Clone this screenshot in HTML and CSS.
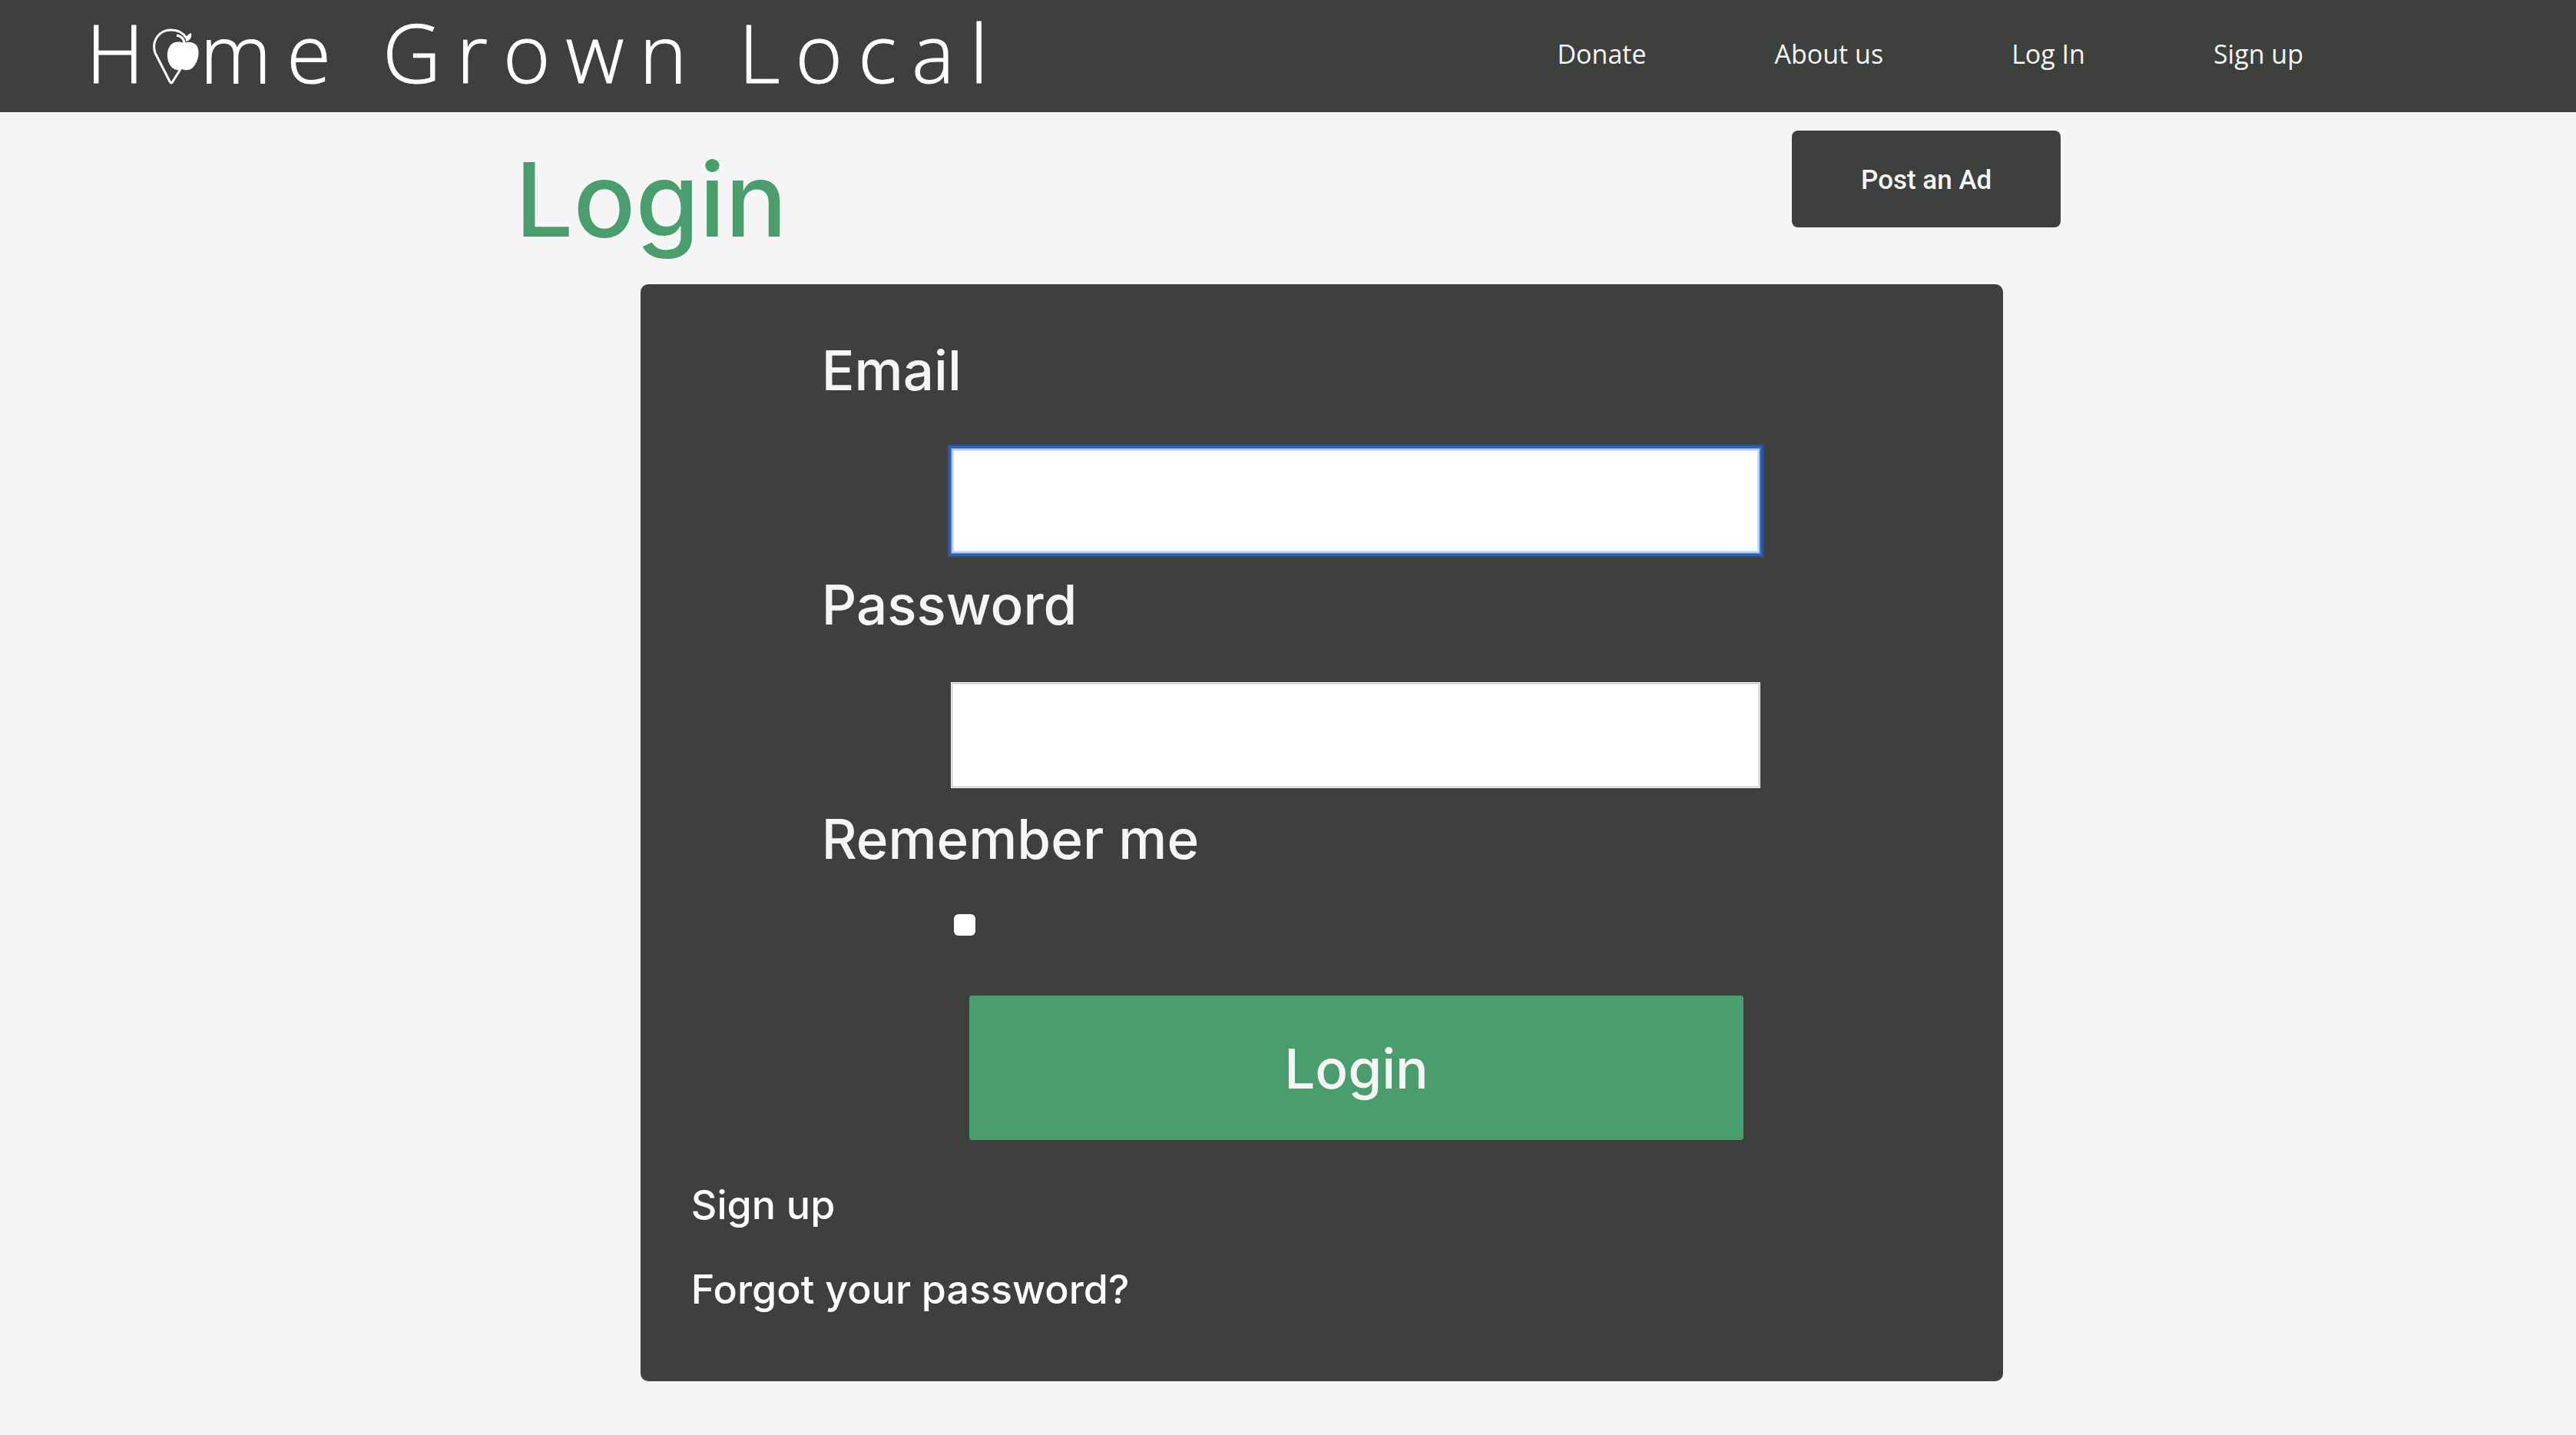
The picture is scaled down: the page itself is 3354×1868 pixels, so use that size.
FILE: index.html
```html
<!DOCTYPE html>
<html lang="en">
<head>
<meta charset="utf-8">
<title>Home Grown Local - Login</title>
<link rel="stylesheet" href="styles.css">
</head>
<body>
<header class="site-header">
  <a class="logo" href="#" aria-label="Home Grown Local">
    <span>H</span>
    <svg class="logo-mark" viewBox="0 0 62 74" aria-hidden="true">
      <path class="pin" d="M36 53 L26 69 Q24 73 22 69 L3 32 C-2 16 8 2 24 2 C34 2 40 6 44 13"/>
      <path class="stem" d="M31 9 C37 10 41 14 41 21"/>
      <path class="apple" d="M40 19 C35 17 29 17 25 20 C17 26 17 42 24 50 C29 55 34 55 38 53 C42 55 49 55 53 50 C60 42 62 27 56 21 C51 17 45 17 40 19 Z"/>
      <path class="apple" d="M43 17 C42 11 45 8 50 6 C51 12 48 16 43 17 Z"/>
    </svg>
    <span>me Grown Local</span>
  </a>
  <nav class="site-nav">
    <a href="#">Donate</a>
    <a href="#">About us</a>
    <a href="#">Log In</a>
    <a href="#">Sign up</a>
  </nav>
</header>
<main class="page">
  <div class="page-top">
    <h1>Login</h1>
    <button class="post-ad" type="button">Post an Ad</button>
  </div>
  <section class="card">
    <form class="login-form">
      <div class="field">
        <label for="email">Email</label>
        <input class="text-input" id="email" type="email" autofocus>
      </div>
      <div class="field">
        <label for="password">Password</label>
        <input class="text-input" id="password" type="password">
      </div>
      <div class="field">
        <label for="remember">Remember me</label>
        <input class="check" id="remember" type="checkbox">
      </div>
      <button class="submit" type="submit">Login</button>
    </form>
    <div class="links">
      <a href="#">Sign up</a>
      <a href="#">Forgot your password?</a>
    </div>
  </section>
</main>
</body>
</html>
```
FILE: styles.css
```css
* { box-sizing: border-box; }

body {
  margin: 0;
  background: #f5f5f5;
  color: #f5f5f5;
  font-family: Inter, sans-serif;
}

a { color: inherit; text-decoration: none; }

.site-header {
  display: flex;
  justify-content: space-between;
  height: 146px;
  padding: 0 355px 0 112px;
  background: #3e403d;
  border-bottom: 1px solid #423a44;
  font-family: "Open Sans", sans-serif;
}

.logo {
  display: flex;
  color: #fff;
  font-size: 105px;
  font-weight: 300;
  line-height: 136px;
  letter-spacing: 20px;
  white-space: nowrap;
  -webkit-text-stroke: 1px #fff;
}

.logo-mark {
  width: 62px;
  height: 74px;
  margin: 37px 0 0 -9px;
}

.pin,
.stem { fill: none; stroke: #fff; stroke-width: 3; }
.apple { fill: #fff; }

.site-nav {
  display: flex;
  gap: 167px;
  font-size: 34px;
  line-height: 140px;
}

.page {
  width: 60%;
  margin: 0 auto;
  padding-bottom: 70px;
}

.page-top {
  display: flex;
  justify-content: space-between;
  align-items: flex-start;
  height: 224px;
  padding-top: 24px;
}

h1 {
  margin: 0;
  color: #4a9d6c;
  font-size: 134px;
  font-weight: 500;
  line-height: 178px;
}

.post-ad {
  width: 350px;
  height: 126px;
  padding-top: 3px;
  border: 0;
  border-radius: 8px;
  background: #3e403d;
  color: #f5f5f5;
  font-family: Roboto, sans-serif;
  font-size: 35px;
  font-weight: 500;
}

.card {
  margin: 0 75px 0 163px;
  padding: 64px 66px;
  border-radius: 10px;
  background: #3e403d;
}

.login-form {
  display: flex;
  flex-direction: column;
  padding: 0 250px 0 170px;
}

.field {
  display: flex;
  flex-direction: column;
}

label {
  font-size: 71px;
  font-weight: 500;
  line-height: 96px;
}

.text-input {
  height: 138px;
  margin: 53px 0 18px 168px;
  padding: 0 24px;
  border: 1px solid #fff;
  border-radius: 0;
  background: #fff;
  box-shadow: inset 0 0 0 1px #bfbfbf, inset 0 0 0 2px #eeeeee;
  font-size: 68px;
}

.text-input:focus {
  border-color: #5a8ae0;
  outline: 0;
  caret-color: transparent;
  box-shadow: inset 0 0 0 1px #9dbcf3, inset 0 0 0 3px #c9dafa, 0 0 0 3px #2c5db0, 0 0 0 5px #384a6a;
}

.check {
  appearance: none;
  width: 28px;
  height: 28px;
  margin: 50px 0 78px 172px;
  border-radius: 6px;
  background: #fff;
}

.submit {
  height: 188px;
  margin: 0 22px 0 192px;
  padding-top: 3px;
  border: 0;
  border-radius: 4px;
  background: #4a9d6c;
  color: #f5f5f5;
  font-family: inherit;
  font-size: 71px;
  font-weight: 500;
}

.links {
  display: flex;
  flex-direction: column;
  align-items: flex-start;
  padding-top: 30px;
  color: #fff;
  font-size: 52px;
  font-weight: 500;
  line-height: 110px;
}
```
